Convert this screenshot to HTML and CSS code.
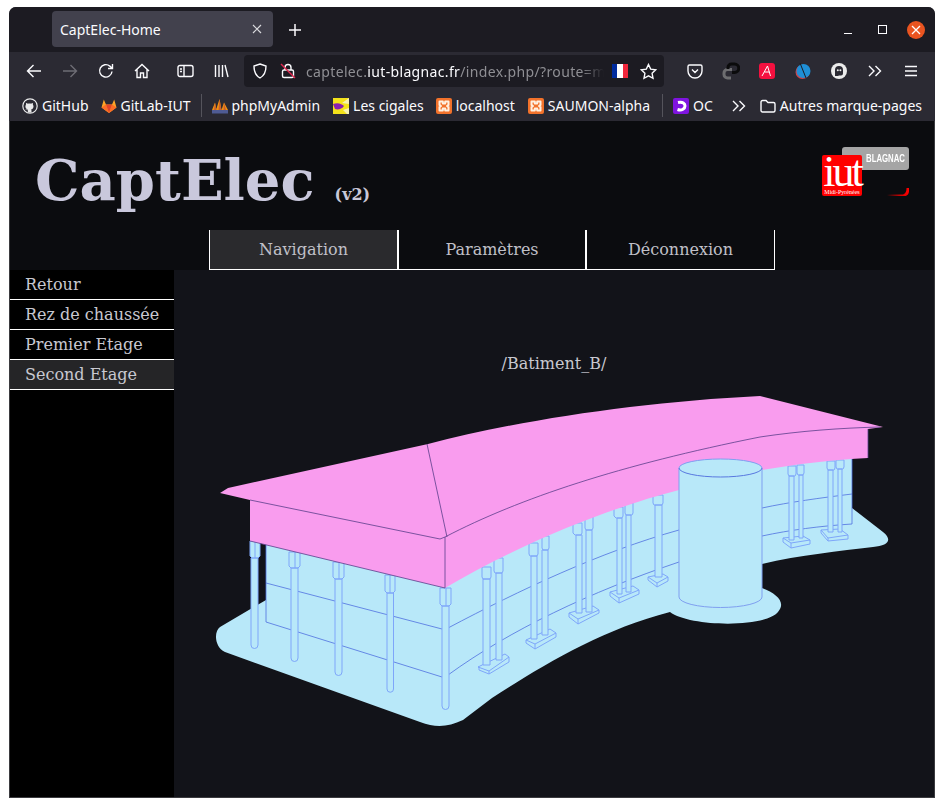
FILE: index.html
```html
<!DOCTYPE html>
<html lang="fr">
<head>
  <meta charset="UTF-8">
  <title>CaptElec-Home</title>
  <link rel="stylesheet" href="styles.css">
</head>
<body>
<div class="window">
  <div class="tabbar">
    <div class="tab">
      <span class="tab-title">CaptElec-Home</span>
      <svg class="tab-close" width="10" height="10" viewBox="0 0 10 10"><path d="M1 1l8 8M9 1l-8 8"/></svg>
    </div>
    <svg class="new-tab" width="14" height="14" viewBox="0 0 14 14"><path d="M7 1v12M1 7h12"/></svg>
    <div class="win-btns">
      <span class="win-min"></span>
      <span class="win-max"></span>
      <span class="win-close"><svg width="10" height="10" viewBox="0 0 10 10"><path d="M1 1l8 8M9 1l-8 8"/></svg></span>
    </div>
  </div>

  <div class="toolbar">
    <svg class="ico ico-back" width="16" height="16" viewBox="0 0 16 16"><path d="M15 8H1.500M7.500 2L1.500 8l6 6"/></svg>
    <svg class="ico ico-fwd" width="16" height="16" viewBox="0 0 16 16"><path d="M1 8h13.500M8.500 2l6 6-6 6"/></svg>
    <svg class="ico ico-reload" width="16" height="16" viewBox="0 0 16 16"><path d="M14 8.500A6.200 6.200 0 1 1 11.800 3.100L14 5M14.500 1v4.500H10"/></svg>
    <svg class="ico ico-home" width="16" height="16" viewBox="0 0 16 16"><path d="M1 8l7-6.500L15 8M3 6.500V14.500h3.500V10h3v4.500H13V6.500"/></svg>
    <svg class="ico ico-side" width="17" height="14" viewBox="0 0 17 14"><rect x="1" y="1.500" width="15" height="11" rx="2"/><path d="M7 1.500v11M3 5h2M3 7.500h2"/></svg>
    <svg class="ico ico-lib" width="15" height="14" viewBox="0 0 15 14"><path d="M1.500 1v12M5 1v12M8.500 1v12M11 1l3 12"/></svg>
    <div class="urlbar">
      <svg class="ico ico-shield" width="16" height="16" viewBox="0 0 16 16"><path d="M8 1l6 2c0 6-1.500 9.500-6 12C3.500 12.500 2 9 2 3z"/></svg>
      <svg class="ico ico-lock" width="16" height="16" viewBox="0 0 16 16"><rect x="2.500" y="7" width="11" height="7.500" rx="1.500"/><path d="M5 7V4.500a3 3 0 0 1 6 0V7"/><path class="lock-slash" d="M1 1l14 14"/></svg>
      <span class="url"><span class="url-dim">captelec.</span>iut-blagnac.fr<span class="url-dim">/index.php/?route=m</span></span>
      <span class="flag"><i class="fl-b"></i><i class="fl-w"></i><i class="fl-r"></i></span>
      <svg class="ico ico-star" width="17" height="17" viewBox="0 0 17 17"><path d="M8.500 1.500l2.200 4.600 5 .7-3.600 3.500.9 5-4.500-2.400-4.500 2.400.9-5L1.300 6.800l5-.7z"/></svg>
    </div>
    <div class="addons">
      <svg class="ico" width="16" height="16" viewBox="0 0 16 16"><path d="M2.500 2h11A1.500 1.500 0 0 1 15 3.500V8a7 7 0 0 1-14 0V3.500A1.500 1.500 0 0 1 2.500 2zM5 6.500L8 9.500l3-3"/></svg>
      <svg class="addon-chain" width="18" height="18" viewBox="0 0 18 18"><path class="chain-grey" d="M10 7.500H5.500A3.500 3.500 0 0 0 2 11v1.500A3.500 3.500 0 0 0 5.500 16H9"/><path class="chain-black" d="M6 7V5.500A3.500 3.500 0 0 1 9.500 2h3a3.500 3.500 0 0 1 0 8.500H10"/></svg>
      <span class="addon-red"><svg width="12" height="12" viewBox="0 0 12 12"><path d="M1 11L6.500 1l3 10M3.500 7h5"/></svg></span>
      <svg class="addon-blue" width="18" height="18" viewBox="0 0 18 18"><circle class="blue-ring" cx="8.500" cy="10" r="7"/><circle class="blue-fill" cx="9.500" cy="9" r="7"/><path class="blue-line" d="M6 1l6 15"/></svg>
      <span class="addon-ghost"><svg width="16" height="16" viewBox="0 0 16 16"><path class="ghost-body" d="M4 13V7a4 4 0 0 1 8 0v3.500a2 2 0 0 1-2 2H7.500V13z"/><circle cx="6.800" cy="7.300" r="1"/><circle cx="9.400" cy="7.300" r="1"/></svg></span>
      <svg class="ico addon-more" width="14" height="12" viewBox="0 0 14 12"><path d="M1 1l5 5-5 5M7.500 1l5 5-5 5"/></svg>
      <svg class="ico addon-menu" width="14" height="12" viewBox="0 0 14 12"><path d="M1 1.500h12M1 6h12M1 10.500h12"/></svg>
    </div>
  </div>

  <div class="bookmarks">
    <span class="bm bm-github"><svg width="16" height="16" viewBox="0 0 16 16"><circle class="gh-c" cx="8" cy="8" r="7.200"/><path class="gh-cat" d="M5.800 14.500v-2.500c-1.500.2-2-.5-2.400-1.300.6.200 1 .6 1.400 1 .3 0 .8-.1 1.100-.3-1.500-.4-2.500-1.400-2.500-3 0-.7.200-1.300.6-1.700-.1-.5-.1-1.100.1-1.700.7 0 1.300.4 1.700.7.800-.2 2.500-.2 3.300 0 .4-.3 1-.7 1.700-.7.200.6.200 1.200.1 1.700.4.400.6 1 .6 1.700 0 1.600-1 2.700-2.500 3 .2.200.5.700.5 1.200v1.900z"/></svg>GitHub</span>
    <span class="bm bm-gitlab"><svg width="16" height="16" viewBox="0 0 16 16"><path class="gl-a" d="M8 15L.500 9.500 2.800 1.500 5 6.500h6l2.200-5 2.300 8z"/><path class="gl-c" d="M8 15L.500 9.500 5 6.500zM8 15l7.500-5.500L11 6.500z"/><path class="gl-b" d="M8 15L5 6.500h6z"/></svg>GitLab-IUT</span>
    <span class="bm-sep"></span>
    <span class="bm bm-pma"><svg width="16" height="16" viewBox="0 0 16 16"><path class="pma-a" d="M0 12L3 4.500l1.500 7.500zM4 12L7.500 1l2 11zM9.500 12L12 4.500 16 12z"/><path class="pma-b" d="M3 4.500L2 12h2.500zM7.500 1L6.500 12h3zM12 4.500L11.500 12H14z"/><rect class="pma-c" x="0" y="12" width="16" height="3.500"/></svg>phpMyAdmin</span>
    <span class="bm bm-cig"><svg width="16" height="16" viewBox="0 0 16 16"><rect class="cig-bg" width="16" height="16"/><path class="cig-t" d="M16 0L9 5 16 6zM16 10L10 12 14 16H16z"/><path class="cig-b" d="M0 6c5-2 9 0 11 2-2 3-6 4-9 3z"/></svg>Les cigales</span>
    <span class="bm bm-x bm-local"><svg width="16" height="16" viewBox="0 0 16 16"><rect class="x-bg" width="16" height="16" rx="2"/><path class="x-fg" d="M3.500 3.500h3.300v2h2.400v-2h3.300v3.400L11 8l1.500 1.100v3.400H9.200v-2H6.800v2H3.500V9.100L5 8 3.500 6.900z"/></svg>localhost</span>
    <span class="bm bm-x"><svg width="16" height="16" viewBox="0 0 16 16"><rect class="x-bg" width="16" height="16" rx="2"/><path class="x-fg" d="M3.500 3.500h3.300v2h2.400v-2h3.300v3.400L11 8l1.500 1.100v3.400H9.200v-2H6.800v2H3.500V9.100L5 8 3.500 6.900z"/></svg>SAUMON-alpha</span>
    <span class="bm-sep"></span>
    <span class="bm bm-oc"><svg width="16" height="16" viewBox="0 0 16 16"><rect class="oc-bg" width="16" height="16" rx="2"/><path class="oc-fg" d="M5 4.500c5-1 7 1 7 3.500s-3 5-7.500 3.500"/></svg>OC</span>
    <svg class="ico bm-more" width="14" height="12" viewBox="0 0 14 12"><path d="M1 1l5 5-5 5M7.500 1l5 5-5 5"/></svg>
    <span class="bm bm-other"><svg class="ico" width="16" height="14" viewBox="0 0 16 14"><path d="M1 3a1.500 1.500 0 0 1 1.500-1.500H6L8 3.500h5.500A1.500 1.500 0 0 1 15 5v6.500a1.500 1.500 0 0 1-1.500 1.500h-11A1.500 1.500 0 0 1 1 11.500z"/></svg>Autres marque-pages</span>
  </div>

  <div class="page">
    <header class="site-head">
      <div class="brand">
        <h1>CaptElec</h1>
        <span class="version">(v2)</span>
      </div>
      <div class="logo">
        <div class="logo-grey"><span class="logo-blagnac">BLAGNAC</span></div>
        <div class="logo-red">
          <span class="logo-iut">iut</span>
          <span class="logo-mp">Midi-Pyrénées</span>
        </div>
        <svg class="logo-swoosh" width="22" height="8" viewBox="0 0 22 8">
          <defs><linearGradient id="swoosh"><stop offset="0" stop-color="#e00000" stop-opacity="0"/><stop offset=".6" stop-color="#d00000"/><stop offset="1" stop-color="#ff0000"/></linearGradient></defs>
          <path fill="url(#swoosh)" d="M0 6.500H15C18 6.500 19.500 4 19.500 0H22V3C22 6 20 8 17.500 8H0z"/>
        </svg>
      </div>
    </header>
    <nav class="main-nav">
      <a class="nav-item nav-active">Navigation</a>
      <a class="nav-item">Paramètres</a>
      <a class="nav-item">Déconnexion</a>
    </nav>
    <div class="content">
      <aside class="side">
        <a class="side-item">Retour</a>
        <a class="side-item">Rez de chaussée</a>
        <a class="side-item">Premier Etage</a>
        <a class="side-item side-active">Second Etage</a>
      </aside>
      <main class="main">
        <p class="path">/Batiment_B/</p>
        <svg class="plan" width="760" height="420" viewBox="174 350 760 420">
          <!-- dalle et murs -->
          <path class="floor" d="M266 545V600L220 627C214 631 214 647 225 652L420 722C436 728 448 727 463 720L492 698C540 667 600 630 670 612C690 627 765 628 778 612C786 603 778 594 762 588V564C800 555 840 551 873 547C888 546 893 540 883 532L852 508V450z"/>
          <path class="line" d="M266 545V622M266 583L442 629M266 622L442 677M448 628C520 590 600 552 679 530M448 675C510 630 590 592 679 562M762 508C790 502 820 498 852 494M762 536C790 530 820 526 852 524M852 450V524"/>
          <!-- poteaux -->
          <g class="posts">
            <path d="M251 558h7v87a3.500 3.500 0 0 1-7 0zM250 541h10v15l-2 2h-6l-2-2zM255 541v17"/>
            <path d="M291 568h7v90a3.500 3.500 0 0 1-7 0zM289 552h11v14l-2 2h-7l-2-2zM295 552v16"/>
            <path d="M335 579h7v93a3.500 3.500 0 0 1-7 0zM333 562h11v15l-2 2h-7l-2-2zM339 562v17"/>
            <path d="M387 593h6.500v96a3.250 3.250 0 0 1-6.500 0zM385 575h10v16l-2 2h-6l-2-2zM390 575v18"/>
            <path d="M442 606h7v100a3.500 3.500 0 0 1-7 0zM440 588h11v16l-2 2h-7l-2-2zM446 588v18"/>

            <path d="M478 667l27-13 4 3v5l-20 12-10-4v-3zM478 667l11 4v3M489 671l20-14"/>
            <path d="M483 579h7v86h-7zM482 567h9v10l-1 2h-7l-1-2zM496 573h6v87h-6zM494 558h9v13l-1 2h-7l-1-2z"/>
            <path d="M526 640l24-11 6 4v4l-21 12-9-6v-3zM526 640l9 4v5M535 644l21-11"/>
            <path d="M531 556h6v83h-6zM529 543h9v11l-1 2h-7l-1-2zM542 550h6v85h-6zM542 536h7v12l-1 2h-5l-1-2z"/>
            <path d="M569 613l24-7 6 4v3l-21 11-9-7v-4zM569 613l9 6v5M578 619l21-9"/>
            <path d="M576 535h6v78h-6zM573 523h9v10l-1 2h-6l-2-2zM586 530h6v82h-6zM585 517h8v11l-1 2h-6l-1-2z"/>
            <path d="M610 592l23-6 6 4v4l-20 9-9-7v-4zM610 592l9 6v5M619 598l20-8"/>
            <path d="M617 518h5v76h-5zM614 507h9v9l-1 2h-6l-2-2zM626 515h5v77h-5zM625 503h8v10l-1 2h-6l-1-2z"/>
            <path d="M648 577l15-3 5 3v4l-11 6-9-7zM648 577l9 6v4M657 583l11-6"/>
            <path d="M655 505h7v72h-7zM653 495h10v8l-1 2h-8l-1-2z"/>
            <path d="M783 538l20-2 7 4v4l-19 4-8-6zM783 538l8 5v5M791 543l19-3"/>
            <path d="M789 476h5v64h-5zM788 466h8v8l-1 2h-6l-1-2zM799 475h4v63h-4zM797 465h7v8l-1 2h-5l-1-2z"/>
            <path d="M821 530l19-1 8 6v4l-20 2-7-8zM821 530l7 8v3M828 538l20-3"/>
            <path d="M828 470h5v62h-5zM827 461h8v7l-1 2h-6l-1-2zM838 469h4v63h-4zM836 460h8v7l-1 2h-6l-1-2z"/>
          </g>
          <!-- toit -->
          <path class="roof" d="M220 493L228 488L428 444C520 420 640 402 760 396L883 427L868 429V458C800 461 720 476 679 490C620 505 530 538 445 588L250 541V500z"/>
          <path class="line-dark" d="M250 500L440 539L445 537C520 498 620 465 760 437C800 431 840 428 880 427M427 444L447 537M445 537V588M250 541L445 588M868 429V458"/>
          <!-- tour -->
          <path class="tower" d="M679 468A41.500 9 0 0 1 762 468V597A41.500 10.500 0 0 1 679 597z"/>
          <path class="tower-line" d="M679 468A41.500 9 0 0 0 762 468"/>
        </svg>
      </main>
    </div>
  </div>
</div>
</body>
</html>
```

FILE: styles.css
```css
html, body {
    margin: 0;
    height: 100%;
}
body {
    background-color: white;
    padding: 7px 9px 9px 9px;
    box-sizing: border-box;
    overflow: hidden;
    font-family: "Noto Sans", sans-serif;
}
svg {
    display: block;
    flex: none;
}
.window {
    height: 100%;
    display: flex;
    flex-direction: column;
    background-color: #2b2a33;
    border-radius: 7px 7px 0 0;
    overflow: hidden;
}

/* barre d'onglets */
.tabbar {
    height: 45px;
    flex: none;
    display: flex;
    align-items: center;
    background-color: #1c1b22;
    padding-left: 43px;
    padding-right: 10px;
    box-sizing: border-box;
}
.tab {
    width: 221px;
    height: 36px;
    margin-top: -1px;
    display: flex;
    align-items: center;
    justify-content: space-between;
    background-color: #42414d;
    border-radius: 4px;
    padding: 0 11px 0 8px;
    box-sizing: border-box;
    color: #fbfbfe;
    font-size: 14px;
}
.tab-close path {
    stroke: #d8d8dc;
    stroke-width: 1.2;
    fill: none;
}
.new-tab {
    margin-left: 15px;
}
.new-tab path {
    stroke: #fbfbfe;
    stroke-width: 1.5;
    fill: none;
}
.win-btns {
    margin-left: auto;
    display: flex;
    align-items: center;
}
.win-min {
    width: 8px;
    height: 1px;
    margin-top: 8px;
    background-color: #fbfbfe;
}
.win-max {
    width: 7px;
    height: 7px;
    margin-left: 26px;
    border: 1px solid #fbfbfe;
}
.win-close {
    width: 18px;
    height: 18px;
    margin-left: 20px;
    border-radius: 50%;
    background-color: #e95420;
    display: flex;
    align-items: center;
    justify-content: center;
}
.win-close path {
    stroke: #fff;
    stroke-width: 1.3;
    fill: none;
}

/* barre d'outils */
.toolbar {
    height: 38px;
    flex: none;
    display: flex;
    align-items: center;
    padding-left: 17px;
    box-sizing: border-box;
}
.ico {
    fill: none;
    stroke: #fbfbfe;
    stroke-width: 1.4;
}
.ico-fwd {
    margin-left: 20px;
    stroke: #6e6d75;
}
.ico-reload {
    margin-left: 20px;
}
.ico-home {
    margin-left: 20px;
}
.ico-side {
    margin-left: 27px;
}
.ico-lib {
    margin-left: 20px;
}
.urlbar {
    width: 420px;
    height: 32px;
    margin-left: 15px;
    display: flex;
    align-items: center;
    flex: none;
    background-color: #1c1b22;
    border-radius: 4px;
    padding-left: 8px;
    box-sizing: border-box;
}
.ico-lock {
    margin-left: 12px;
}
.lock-slash {
    stroke: #e22850;
}
.url {
    width: 302px;
    margin-left: 10px;
    flex: none;
    overflow: hidden;
    white-space: nowrap;
    color: #fbfbfe;
    font-size: 14px;
    letter-spacing: .35px;
    -webkit-mask-image: linear-gradient(to right, black 275px, transparent 298px);
    mask-image: linear-gradient(to right, black 275px, transparent 298px);
}
.url-dim {
    color: #8f8f94;
}
.flag {
    width: 16px;
    height: 14px;
    margin-left: 4px;
    display: flex;
}
.flag i {
    flex: 1;
}
.fl-b { background-color: #002b9e; }
.fl-w { background-color: #fff; }
.fl-r { background-color: #f0263c; }
.ico-star {
    margin-left: 12px;
}
.addons {
    display: flex;
    align-items: center;
    gap: 19px;
    margin-left: 23px;
}
.chain-grey, .chain-black {
    fill: none;
    stroke-width: 3;
}
.chain-grey { stroke: #6d6d70; }
.chain-black { stroke: #0b0b0c; }
.addon-red {
    width: 16px;
    height: 16px;
    background-color: #f5103f;
    border-radius: 3px;
    display: flex;
    align-items: center;
    justify-content: center;
}
.addon-red path {
    stroke: white;
    fill: none;
}
.blue-ring { fill: #c8474f; }
.blue-fill { fill: #1f8fd6; }
.blue-line { stroke: #1c1b22; }
.addon-ghost {
    width: 16px;
    height: 16px;
    background-color: #ececec;
    border-radius: 50%;
}
.ghost-body { fill: #2b2a33; }
.addon-ghost circle { fill: #ececec; }
.addon-more {
    margin-left: 2px;
}
.addon-menu {
    margin-left: 3px;
}

/* marque-pages */
.bookmarks {
    height: 31px;
    flex: none;
    display: flex;
    align-items: center;
    padding-left: 13px;
    color: #fbfbfe;
    font-size: 14px;
    white-space: nowrap;
}
.bm {
    display: flex;
    align-items: center;
    gap: 4px;
    margin-right: 12px;
}
.bm-gitlab {
    margin-right: 11px;
}
.bm-pma {
    gap: 3px;
    margin-right: 13px;
}
.bm-local {
    margin-right: 13px;
}
.bm-sep {
    width: 1px;
    height: 23px;
    background-color: #55545c;
    margin-right: 10px;
}
.gh-c { fill: #2b2a33; stroke: #e9e9ea; stroke-width: 1.2; }
.gh-cat { fill: #e9e9ea; }
.gl-a { fill: #fca326; }
.gl-b { fill: #e24329; }
.gl-c { fill: #fc6d26; }
.pma-a { fill: #f29111; }
.pma-b { fill: #c9602a; }
.pma-c { fill: #4f5b93; }
.cig-bg { fill: #f4e21a; }
.cig-t { fill: #f7f3b0; }
.cig-b { fill: #8a1fb0; }
.x-bg { fill: #f2722b; }
.x-fg { fill: #f2722b; stroke: #fff0e0; stroke-width: 2; stroke-linejoin: round; }
.oc-bg { fill: #7f14e0; }
.oc-fg { fill: none; stroke: white; stroke-width: 3; }
.bm-more {
    margin-left: 7px;
    margin-right: 14px;
}
.bm-other {
    margin-right: 0;
}

/* page */
.page {
    flex: 1;
    min-height: 0;
    display: flex;
    flex-direction: column;
    background-color: #0b0c0f;
    border: 1px solid #3b3b3f;
    border-top: none;
    color: #c8c8d8;
    font-family: "DejaVu Serif", serif;
}
.site-head {
    height: 109px;
    flex: none;
    display: flex;
    justify-content: space-between;
    padding: 0 25px;
    box-sizing: border-box;
}
.brand {
    display: flex;
    align-items: baseline;
    gap: 20px;
    padding-top: 23px;
}
h1 {
    margin: 0;
    font-size: 56px;
    line-height: 72px;
    font-weight: bold;
    color: #c9c8dc;
}
.version {
    font-size: 16px;
    font-weight: bold;
}
.logo {
    width: 87px;
    height: 49px;
    margin-top: 26px;
    position: relative;
}
.logo-grey {
    position: absolute;
    left: 20px;
    top: 0;
    width: 67px;
    height: 23px;
    background-color: #a5a5a5;
    border-radius: 3px;
    box-sizing: border-box;
    padding: 6px 4px 0 0;
    color: white;
    font: bold 10px/12px "Liberation Sans", sans-serif;
    text-align: right;
}
.logo-blagnac {
    display: inline-block;
    transform: scaleX(.78);
    transform-origin: right center;
}
.logo-red {
    position: absolute;
    left: 0;
    top: 8px;
    width: 40px;
    height: 41px;
    background-color: #ff0000;
    border-radius: 2px;
    color: white;
    text-align: center;
}
.logo-iut {
    display: block;
    font: 44px/34px "Liberation Serif", serif;
    letter-spacing: -3px;
}
.logo-mp {
    display: block;
    font: 6px/7px "Liberation Serif", serif;
    white-space: nowrap;
}
.logo-swoosh {
    position: absolute;
    right: 0;
    bottom: 0;
}
.main-nav {
    height: 40px;
    flex: none;
    display: flex;
    margin-left: 199px;
}
.nav-item {
    width: 188px;
    display: flex;
    align-items: center;
    justify-content: center;
    box-sizing: border-box;
    border-left: 1px solid white;
    border-bottom: 1px solid white;
    font-size: 16px;
    color: #c0c0c8;
}
.nav-item:nth-child(2) {
    border-left-width: 2px;
}
.nav-item:nth-child(3) {
    width: 190px;
    border-left-width: 2px;
    border-right: 1px solid white;
}
.nav-active {
    background-color: #2a2a2d;
}
.content {
    flex: 1;
    min-height: 0;
    display: flex;
    background-color: #121319;
}
.side {
    width: 164px;
    flex: none;
    background-color: black;
}
.side-item {
    height: 30px;
    display: block;
    box-sizing: border-box;
    border-bottom: 1px solid white;
    padding-left: 15px;
    font-size: 16px;
    line-height: 30px;
    color: #c8c8d0;
}
.side-active {
    background-color: #252527;
}
.main {
    flex: 1;
    min-width: 0;
    position: relative;
    overflow: hidden;
}
.path {
    margin: 83px 0 0 0;
    text-align: center;
    font-size: 16px;
    line-height: 22px;
    color: #c8c8d0;
}
.plan {
    position: absolute;
    left: 0;
    top: 80px;
}
.floor {
    fill: #b8e8f9;
}
.line {
    fill: none;
    stroke: #4f70e0;
    stroke-width: .8;
}
.posts path {
    fill: #b8e8f9;
    stroke: #7ea6fa;
    stroke-width: 1;
}
.roof {
    fill: #f99cee;
}
.line-dark {
    fill: none;
    stroke: #5a3f8a;
    stroke-width: .8;
}
.tower {
    fill: #b8e8f9;
    stroke: #7f9ff0;
    stroke-width: 1;
}
.tower-line {
    fill: none;
    stroke: #5878e0;
    stroke-width: 1;
}
```
